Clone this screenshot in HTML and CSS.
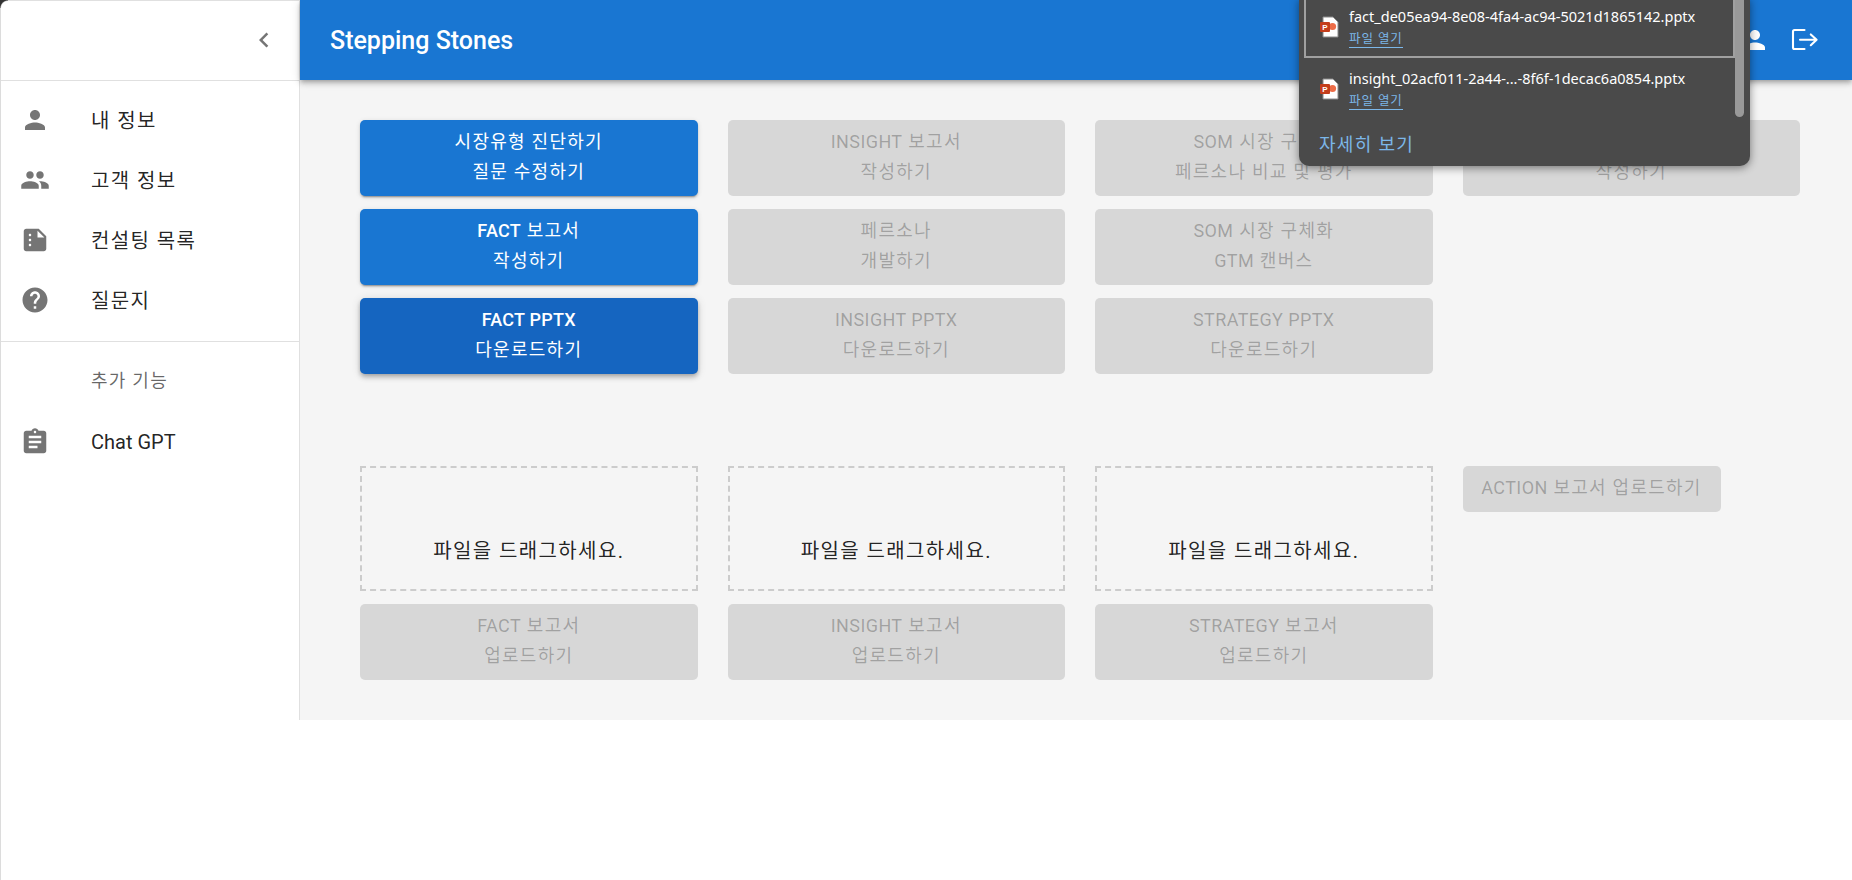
FILE: index.html
```html
<!DOCTYPE html>
<html lang="ko">
<head>
<meta charset="utf-8">
<title>Stepping Stones</title>
<link rel="stylesheet" href="styles.css">
</head>
<body>
<div class="app">
  <aside class="sidebar">
    <div class="side-head">
      <svg class="icon chev" viewBox="0 0 24 24"><path d="M15.41 7.41L14 6l-6 6 6 6 1.41-1.41L10.83 12z"/></svg>
    </div>
    <nav class="side-list">
      <a class="side-item"><svg class="icon" viewBox="0 0 24 24"><path d="M12 12c2.21 0 4-1.79 4-4s-1.79-4-4-4-4 1.79-4 4 1.79 4 4 4zm0 2c-2.67 0-8 1.34-8 4v2h16v-2c0-2.66-5.33-4-8-4z"/></svg><span>내 정보</span></a>
      <a class="side-item"><svg class="icon" viewBox="0 0 24 24"><path d="M16 11c1.66 0 2.99-1.34 2.99-3S17.66 5 16 5c-1.66 0-3 1.34-3 3s1.34 3 3 3zm-8 0c1.66 0 2.99-1.34 2.99-3S9.66 5 8 5C6.34 5 5 6.34 5 8s1.34 3 3 3zm0 2c-2.33 0-7 1.17-7 3.5V19h14v-2.5c0-2.33-4.67-3.5-7-3.5zm8 0c-.29 0-.62.02-.97.05 1.16.84 1.97 1.97 1.97 3.45V19h6v-2.5c0-2.33-4.67-3.5-7-3.5z"/></svg><span>고객 정보</span></a>
      <a class="side-item"><svg class="icon" viewBox="0 0 24 24"><path d="M15 3H5c-1.1 0-2 .9-2 2v14c0 1.1.9 2 2 2h14c1.1 0 2-.9 2-2V9l-6-6zM8 17c-.55 0-1-.45-1-1s.45-1 1-1 1 .45 1 1-.45 1-1 1zm0-4c-.55 0-1-.45-1-1s.45-1 1-1 1 .45 1 1-.45 1-1 1zm0-4c-.55 0-1-.45-1-1s.45-1 1-1 1 .45 1 1-.45 1-1 1zm6 1V4.5l5.5 5.5H14z"/></svg><span>컨설팅 목록</span></a>
      <a class="side-item"><svg class="icon" viewBox="0 0 24 24"><path d="M12 2C6.48 2 2 6.48 2 12s4.48 10 10 10 10-4.48 10-10S17.52 2 12 2zm1 17h-2v-2h2v2zm2.07-7.75l-.9.92C13.45 12.9 13 13.5 13 15h-2v-.5c0-1.1.45-2.1 1.17-2.83l1.24-1.26c.37-.36.59-.86.59-1.41 0-1.1-.9-2-2-2s-2 .9-2 2H8c0-2.21 1.79-4 4-4s4 1.79 4 4c0 .88-.36 1.68-.93 2.25z"/></svg><span>질문지</span></a>
    </nav>
    <div class="side-list side-extra">
      <div class="side-sub">추가 기능</div>
      <a class="side-item"><svg class="icon" viewBox="0 0 24 24"><path d="M19 3h-4.18C14.4 1.84 13.3 1 12 1c-1.3 0-2.4.84-2.82 2H5c-1.1 0-2 .9-2 2v14c0 1.1.9 2 2 2h14c1.1 0 2-.9 2-2V5c0-1.1-.9-2-2-2zm-7 0c.55 0 1 .45 1 1s-.45 1-1 1-1-.45-1-1 .45-1 1-1zm2 14H7v-2h7v2zm3-4H7v-2h10v2zm0-4H7V7h10v2z"/></svg><span class="latin">Chat GPT</span></a>
    </div>
  </aside>
  <div class="content">
    <header class="appbar">
      <div class="title">Stepping Stones</div>
      <div class="bar-icons">
        <svg class="icon white" viewBox="0 0 24 24"><path d="M12 12c2.21 0 4-1.79 4-4s-1.79-4-4-4-4 1.79-4 4 1.79 4 4 4zm0 2c-2.67 0-8 1.34-8 4v2h16v-2c0-2.66-5.33-4-8-4z"/></svg>
        <svg class="logout" viewBox="0 0 30 30" fill="none" stroke="#fff" stroke-width="2.1" stroke-linecap="round" stroke-linejoin="round"><path d="M14.5 5H4.5a1.5 1.5 0 0 0-1.5 1.5v16a1.5 1.5 0 0 0 1.5 1.5h10"/><path d="M10 14.8h16.4M20.8 9.4l5.8 5.4-5.8 5.4"/></svg>
      </div>
    </header>
    <main class="main">
      <section class="btn-grid">
        <div class="col">
          <button class="btn primary">시장유형 진단하기<br>질문 수정하기</button>
          <button class="btn primary"><span class="en">FACT</span> 보고서<br>작성하기</button>
          <button class="btn primary dark"><span class="en">FACT PPTX</span><br>다운로드하기</button>
        </div>
        <div class="col">
          <button class="btn" disabled><span class="en">INSIGHT</span> 보고서<br>작성하기</button>
          <button class="btn" disabled>페르소나<br>개발하기</button>
          <button class="btn" disabled><span class="en">INSIGHT PPTX</span><br>다운로드하기</button>
        </div>
        <div class="col">
          <button class="btn" disabled><span class="en">SOM</span> 시장 구체화<br>페르소나 비교 및 평가</button>
          <button class="btn" disabled><span class="en">SOM</span> 시장 구체화<br><span class="en">GTM</span> 캔버스</button>
          <button class="btn" disabled><span class="en">STRATEGY PPTX</span><br>다운로드하기</button>
        </div>
        <div class="col">
          <button class="btn" disabled><span class="en">ACTION</span> 보고서<br>작성하기</button>
        </div>
      </section>
      <section class="btn-grid upload">
        <div class="col">
          <div class="drop">파일을 드래그하세요.</div>
          <button class="btn" disabled><span class="en">FACT</span> 보고서<br>업로드하기</button>
        </div>
        <div class="col">
          <div class="drop">파일을 드래그하세요.</div>
          <button class="btn" disabled><span class="en">INSIGHT</span> 보고서<br>업로드하기</button>
        </div>
        <div class="col">
          <div class="drop">파일을 드래그하세요.</div>
          <button class="btn" disabled><span class="en">STRATEGY</span> 보고서<br>업로드하기</button>
        </div>
        <div class="col">
          <button class="btn single" disabled><span class="en">ACTION</span> 보고서 업로드하기</button>
        </div>
      </section>
    </main>
  </div>
</div>
<div class="corner"></div>
<div class="downloads">
  <div class="dl-item selected">
    <svg class="ppt" viewBox="0 0 20 22"><path d="M4 1h10l5 5v15H4z" fill="#fff" stroke="#8a8a8a" stroke-width="1"/><circle cx="13.5" cy="10.5" r="3.6" fill="#ed6c47"/><rect x="1" y="6" width="10" height="10" rx="1" fill="#c43e1c"/><text class="ppt-p" x="6" y="14.4" text-anchor="middle">P</text></svg>
    <div class="dl-text"><div class="dl-name">fact_de05ea94-8e08-4fa4-ac94-5021d1865142.pptx</div><a class="dl-link">파일 열기</a></div>
  </div>
  <div class="dl-item second">
    <svg class="ppt" viewBox="0 0 20 22"><path d="M4 1h10l5 5v15H4z" fill="#fff" stroke="#8a8a8a" stroke-width="1"/><circle cx="13.5" cy="10.5" r="3.6" fill="#ed6c47"/><rect x="1" y="6" width="10" height="10" rx="1" fill="#c43e1c"/><text class="ppt-p" x="6" y="14.4" text-anchor="middle">P</text></svg>
    <div class="dl-text"><div class="dl-name">insight_02acf011-2a44-...-8f6f-1decac6a0854.pptx</div><a class="dl-link">파일 열기</a></div>
  </div>
  <a class="dl-more">자세히 보기</a>
  <div class="dl-scroll"></div>
</div>
</body>
</html>
```
FILE: styles.css
```css
* { box-sizing: border-box; }
html, body { margin: 0; height: 100%; background: #fff; overflow: hidden; }
body { font-family: Roboto, "Noto Sans CJK KR", sans-serif; position: relative; }
.app { display: flex; align-items: flex-start; width: 1852px; height: 880px; border-left: 1px solid #dcdcdc; }
.corner { position: absolute; left: 0; top: 0; width: 8px; height: 8px; background: radial-gradient(circle at 100% 100%, transparent 6.5px, #dcdcdc 7px, #333 8px); }
.sidebar { width: 299px; height: 720px; flex: none; background: #fff; border-right: 1px solid #e0e0e0; border-top: 1px solid #e0e0e0; color: rgba(0,0,0,.87); }
.side-head { height: 80px; display: flex; justify-content: flex-end; align-items: center; padding: 0 20px 1px 0; border-bottom: 1px solid #e0e0e0; }
.icon { width: 30px; height: 30px; fill: #757575; flex: none; }
.icon.white { fill: #fff; }
.side-list { padding: 9px 0 11px; border-bottom: 1px solid #e0e0e0; }
.side-extra { border-bottom: 0; padding-top: 8px; }
.side-item { display: flex; align-items: center; height: 60px; padding-left: 19px; font-size: 20px; gap: 41px; letter-spacing: .07em; }
.side-item span { margin-bottom: 2px; }
.side-item .latin { letter-spacing: 0; margin-bottom: 0; }
.side-sub { height: 62px; padding-left: 90px; line-height: 62px; font-size: 18px; letter-spacing: .07em; color: rgba(0,0,0,.6); }
.content { flex: 1; display: flex; flex-direction: column; height: 720px; background: #f5f5f5; }
.appbar { height: 80px; flex: none; display: flex; align-items: center; justify-content: space-between; padding: 0 32px 0 30px; background: #1976d2; color: #fff; box-shadow: 0 2px 4px -1px rgba(0,0,0,.2), 0 4px 5px 0 rgba(0,0,0,.14), 0 1px 10px 0 rgba(0,0,0,.12); }
.title { font-size: 25px; font-weight: 500; }
.bar-icons { display: flex; align-items: center; gap: 20px; }
.logout { width: 30px; height: 30px; }
.main { padding: 40px 52px 40px 60px; }
.btn-grid { display: grid; grid-template-columns: repeat(4, 337.5px); column-gap: 30px; }
.upload { margin-top: 92px; }
.col { display: flex; flex-direction: column; gap: 13px; align-items: stretch; }
.btn { height: 76px; border: 0; border-radius: 5px; padding: 0 0 2px; font: 400 18px/30px Roboto, "Noto Sans CJK KR", sans-serif; letter-spacing: .07em; background: rgba(0,0,0,.12); color: rgba(0,0,0,.26); }
.en { font-weight: 400; letter-spacing: .4px; }
.primary .en { font-weight: 500; letter-spacing: .25px; }
.primary { background: #1976d2; color: #fff; box-shadow: 0 3px 1px -2px rgba(0,0,0,.2), 0 2px 2px 0 rgba(0,0,0,.14), 0 1px 5px 0 rgba(0,0,0,.12); }
.dark { background: #1565c0; box-shadow: 0 2px 4px -1px rgba(0,0,0,.2), 0 4px 5px 0 rgba(0,0,0,.14), 0 1px 10px 0 rgba(0,0,0,.12); }
.single { height: 46px; width: 258px; }
.drop { height: 125px; border: 2px dashed #ccc; display: flex; align-items: flex-end; justify-content: center; padding-bottom: 23px; font-size: 20px; line-height: 30px; letter-spacing: .07em; color: rgba(0,0,0,.87); }
.downloads { position: absolute; left: 1299px; top: -2px; width: 451px; height: 168px; background: #4a4a4a; border-radius: 0 0 10px 10px; box-shadow: 0 2px 8px rgba(0,0,0,.45); color: #fff; font-family: "Noto Sans", "Noto Sans CJK KR", sans-serif; }
.dl-item { display: flex; gap: 10px; align-items: center; height: 60px; padding: 0 0 0 20px; width: 436px; }
.dl-item.selected { border: 2px solid #a0a0a0; border-top: 0; padding-left: 13px; margin-left: 5px; width: 431px; }
.dl-item.second { height: 62px; }
.ppt { width: 20px; height: 22px; flex: none; }
.ppt-p { font: 700 8px "Liberation Sans", sans-serif; fill: #fff; }
.dl-name { font-size: 14.5px; line-height: 20px; white-space: nowrap; }
.dl-link { display: inline-block; font-size: 12.5px; line-height: 17px; letter-spacing: .07em; color: #7cb7e8; border-bottom: 1px solid #7cb7e8; }
.dl-more { display: block; margin: 10px 0 0 20px; font-size: 18px; letter-spacing: .07em; color: #7cb7e8; }
.dl-scroll { position: absolute; right: 6px; top: 0; width: 9px; height: 119px; background: #999; border-radius: 0 0 5px 5px; }
```
